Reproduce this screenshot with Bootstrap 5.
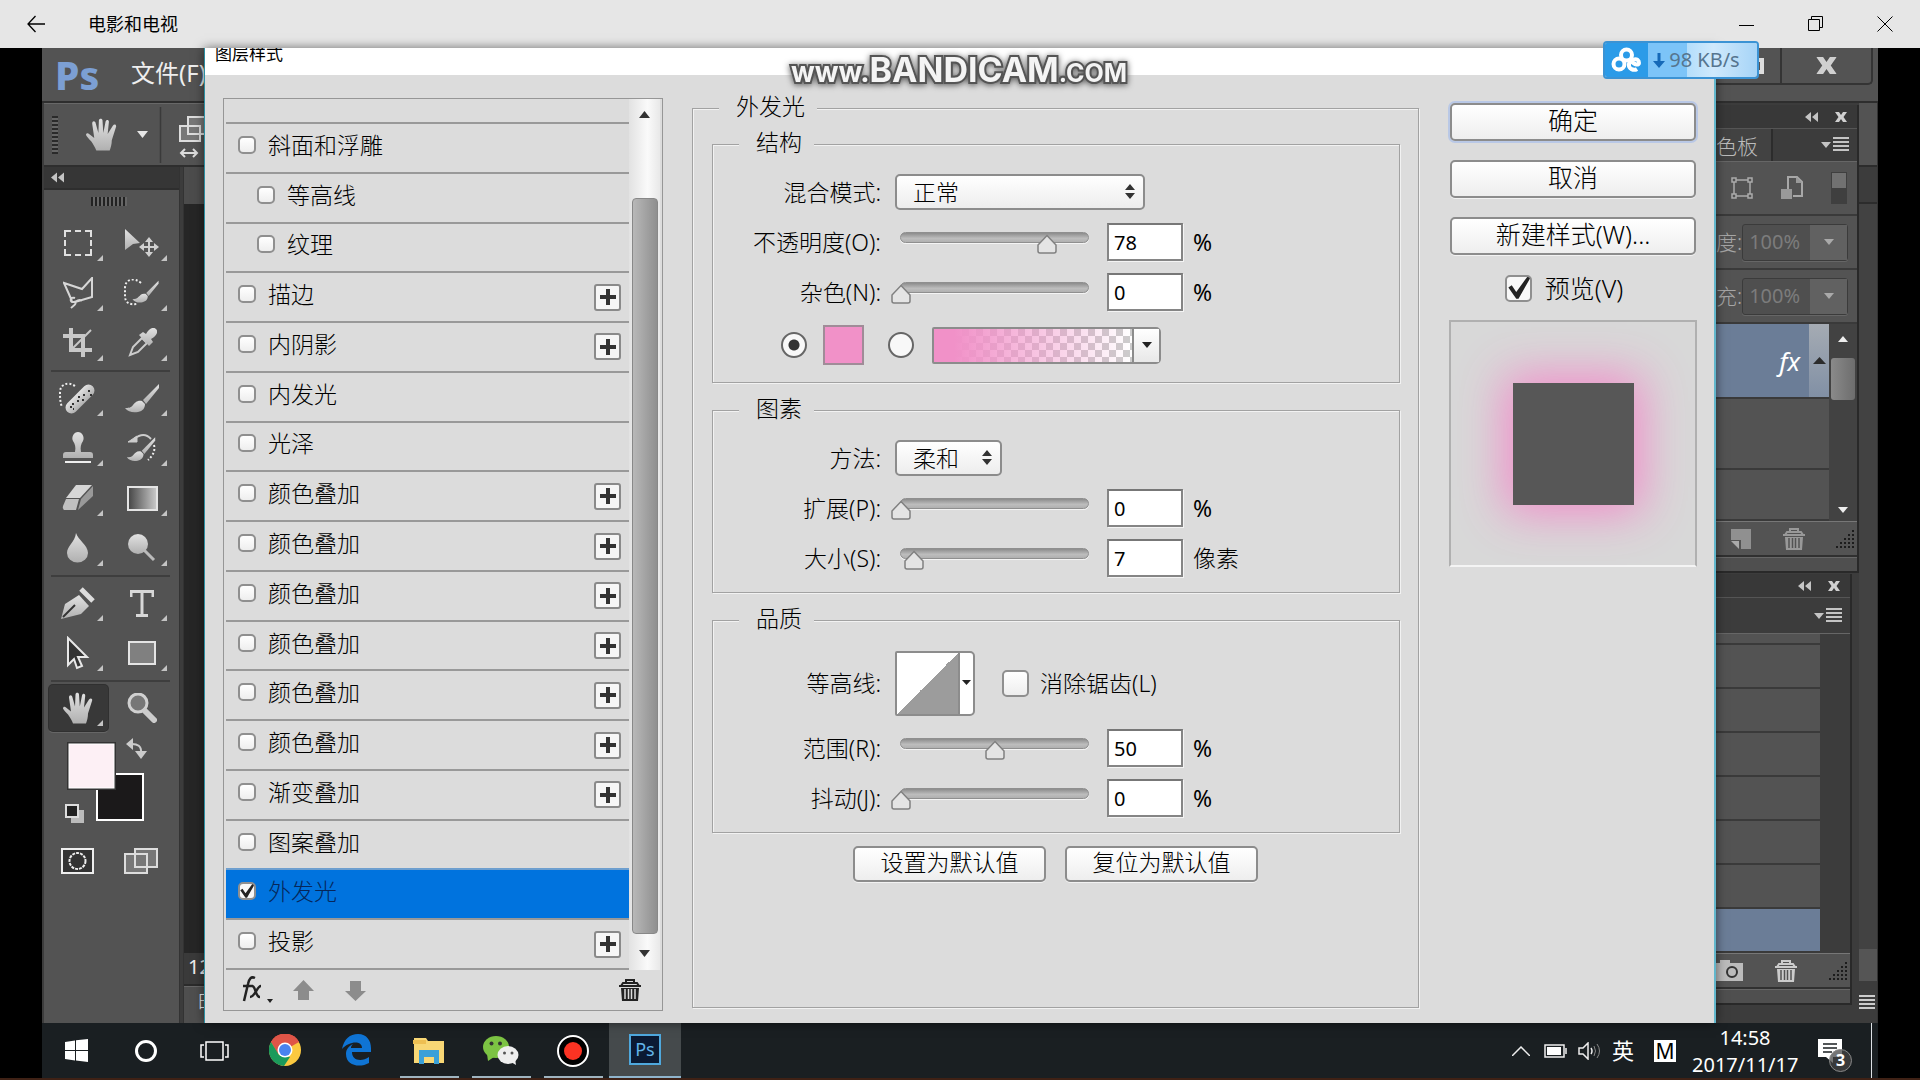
<!DOCTYPE html>
<html lang="zh-CN">
<head>
<meta charset="utf-8">
<meta name="viewport" content="width=device-width, initial-scale=1">
<title>电影和电视</title>
<link href="https://cdn.jsdelivr.net/npm/bootstrap@5.3.0/dist/css/bootstrap.min.css" rel="stylesheet">
<style>
:root{--ps:#535353;--ps-dark:#3c3c3c;--ps-line:#2e2e2e;--ps-hi:#686868;--dlg:#dcdcdc;--edge:#8c8c8c}
body{font-family:"Noto Sans","Noto Sans CJK SC",sans-serif;font-size:23px;line-height:28px;color:#000;background:#000;font-weight:300}
svg{display:block;flex:none}
button{font:inherit;color:inherit;padding:0;border:0;background:none}
.titlebar{height:48px;background:#e6e6e6;padding:0 1px 0 27px;font-size:18px;font-weight:400;color:#000}
.titlebar .caption{padding-left:43px}
.winbtn{width:69px;height:48px;display:grid;place-items:center}
.stage{padding:0 42px;min-height:0}
.side{width:162px;background:var(--ps-dark);overflow:hidden;color:#eee}
/* left side */
.menubar{height:55px;background:var(--ps);border-bottom:2px solid var(--ps-line);padding-left:13px;white-space:nowrap;font-size:24px;font-weight:400}
.ps-logo{font:800 39px/48px "Noto Sans",sans-serif;color:#7c9fd3;width:76px;flex:none}
.menubar span+span{line-height:46px;height:50px}
.optbar{height:64px;background:var(--ps);border-top:1px solid var(--ps-hi);border-bottom:2px solid var(--ps-line);margin-left:2px;padding-left:8px}
.grip{width:6px;height:38px;flex:none;margin-right:28px;background:repeating-linear-gradient(#2a2a2a 0 2px,#666 2px 4px)}
.toolcol{width:136px;flex:none;margin-left:2px;background:var(--ps);border-right:1px solid #333}
.toolhead{height:23px;background:#363636;border-bottom:2px solid var(--ps-line);padding:5px 0 0 7px}
.hgrip{width:36px;height:9px;margin:7px auto 12px 47px;background:repeating-linear-gradient(90deg,#222 0 2px,#666 2px 4px)}
.tools{display:grid;grid-template-columns:64px 64px;padding-left:2px}
.tool{width:64px;height:50px;display:grid;place-items:center;position:relative}
.tool::after{content:"";position:absolute;right:7px;bottom:7px;border-left:6px solid transparent;border-bottom:6px solid #c4c4c4}
.tool.plain::after{display:none}
.tool.active{background:#383838;border-radius:4px;width:59px;height:46px;margin:2px 0 2px 3px;box-shadow:0 0 0 1px #303030,0 2px 0 #666}
.tool.active::after{right:5px;bottom:5px}
.toolsep{grid-column:1/3;height:2px;background:#3e3e3e;margin:2px 4px 1px 5px}
.swatches{margin:5px 0 0 17px}
.doccol{margin-left:3px;min-width:0;background:#262626;border-left:1px solid #333}
.doctab{height:37px;background:#4c4c4c}
.zoomnum{height:33px;background:#3a3a3a;font-size:20px;font-weight:400;padding-left:4px;line-height:28px;border-bottom:2px solid #2b2b2b}
.timeline{height:37px;background:#4f4f4f;padding:2px 0 0 14px;font-size:20px;border-top:1px solid #666;white-space:nowrap}
/* dialog */
.dialogbox{background:var(--dlg);border-left:1px solid #2b8fa3;border-right:2px solid #62b7cc;box-shadow:0 0 10px #0008;z-index:1;min-width:0}
.dlg-title{height:27px;background:#fff;font-size:17px;font-weight:400;line-height:24px;padding-left:10px;overflow:hidden;color:#000}
.dlg-title span{display:block;margin-top:-6px}
.dlg-body{padding:0 17px 0 18px;min-height:0}
.stylelist{width:440px;margin:23px 0 12px;border:1px solid #969696;padding:0 2px;min-width:0}
.rowhead{height:23px}
.styles{--bs-list-group-bg:transparent;border-radius:0}
.styles li{border-top:2px solid #999;padding:0 8px 0 12px;min-height:0;flex:1 1 0}
.styles li:last-child{border-bottom:2px solid #999}
.styles li.sub{padding-left:31px}
.styles li label{padding-bottom:6px;gap:12px}
.styles li.on{background:#0073de;color:#06275a;border-color:#6e9fcf}
.tick{appearance:none;margin:0;flex:none;width:18px;height:18px;border:2px solid #8f8f8f;border-radius:5px;background:#f8f8f8 linear-gradient(#fff,#eee)}
.tick:checked{border-image:none;background:#f8f8f8 url("data:image/svg+xml,%3Csvg xmlns='http://www.w3.org/2000/svg' viewBox='0 0 24 24'%3E%3Cpath d='M3 11l3-2 4 6L21 0h3L12 21h-2z' fill='%23222'/%3E%3C/svg%3E") center/100% border-box}
.tick.big{width:27px;height:27px}
.plusbtn{width:27px;height:27px;border:2px solid #8a8a8a;border-radius:3px;background:#f6f6f6;display:grid;place-items:center}
.vscroll{width:31px;background:linear-gradient(90deg,#e2e2e2,#fafafa 60%,#e8e8e8);padding:12px 2px 13px}
.vthumb{width:26px;border:1px solid #888;border-radius:4px;background:linear-gradient(90deg,#b8b8b8,#8f8f8f)}
.listfoot{height:40px;padding:0 19px 0 14px}
.group{border:1px solid #a2a2a2;box-shadow:inset 1px 1px #f2f2f2,1px 1px #f2f2f2;margin:0;min-width:0}
.group>legend{float:none;width:auto;font-size:23px;line-height:25px;height:28px;margin:0 0 0 26px;padding:0 12px 0 17px;background:var(--dlg)}
.outer{margin:19px 30px 15px 29px;padding:8px 18px 0 19px}
.outer>legend{margin-left:7px}
.inner{padding:9px 0}
.inner+.inner{margin-top:13px}
.frow{height:50px}
.frow.tall{height:56px}
.frow.contour{height:80px}
.flabel{width:168px;text-align:right;margin-right:9px;white-space:nowrap}
.unit{font-weight:400}
.nudge{margin-left:5px}
.pick{appearance:none;height:36px;border:2px solid var(--edge);border-radius:5px;padding:0 16px;font-size:23px;font-weight:300;line-height:30px;color:#000;background:url("data:image/svg+xml,%3Csvg xmlns='http://www.w3.org/2000/svg' width='12' height='16'%3E%3Cpath d='M1 6L6 0l5 6zM1 9h10l-5 6z' fill='%23333'/%3E%3C/svg%3E") right 7px center no-repeat,linear-gradient(#fff,#ededed)}
.pick.wide{width:250px}.pick.short{width:107px}
.rail{width:209px;height:38px;position:relative;margin-right:8px}
.rail::before{content:"";position:absolute;left:10px;right:10px;top:9px;height:11px;border-radius:6px;background:linear-gradient(#8c8c8c,#bdbdbd 60%,#b0b0b0);border:1px solid #8f8f8f;box-shadow:0 1px #f4f4f4}
.rail input{appearance:none;position:relative;display:block;width:209px;height:38px;background:none;margin:0}
.rail input::-webkit-slider-thumb{appearance:none;width:22px;height:20px;margin-top:4px;background:url("data:image/svg+xml,%3Csvg xmlns='http://www.w3.org/2000/svg' width='22' height='20'%3E%3Cpath d='M11 1.500L20 11v6q0 2-2 2H4q-2 0-2-2v-6z' fill='%23e4e4e4' stroke='%23808080' stroke-width='1.500'/%3E%3C/svg%3E")}
.numbox{width:76px;height:38px;border:2px solid #858585;border-top-color:#777;background:#fff;padding:1px 5px 0;font-size:20px;font-weight:400;margin-right:10px;box-shadow:1px 1px #f4f4f4}
.dot{appearance:none;width:26px;height:26px;border:2px solid #666;border-radius:50%;margin:0;background:#f8f8f8}
.dot:checked{background:radial-gradient(circle,#333 0 5px,#f8f8f8 6px)}
.colorbox{width:41px;height:40px;border:2px solid #a08c98;background:#f191c8}
.gradpick{width:229px;height:37px;border:2px solid var(--edge);border-radius:2px 5px 5px 2px;display:flex;padding:0}
.gradpick i{flex:1;background:linear-gradient(90deg,#f191c8 10%,#f191c800),conic-gradient(#fff 25%,#ccc 0 50%,#fff 0 75%,#ccc 0) 0 0/14px 14px}
.gradpick b{width:27px;border-left:2px solid var(--edge);background:linear-gradient(#fff,#e8e8e8);display:grid;place-items:center}
.curve{width:80px;height:65px;border:2px solid var(--edge);border-radius:2px 5px 5px 2px;display:flex;padding:0;background:#fff}
.curve i{flex:1;background:linear-gradient(to bottom right,#fff 50%,#9c9c9c 50%)}
.curve b{width:15px;border-left:2px solid var(--edge);display:grid;place-items:center}
.pushbtn{border:2px solid var(--edge);border-radius:5px;background:linear-gradient(#fff,#eee);box-shadow:0 1px #f2f2f2;white-space:nowrap;padding-bottom:4px}
.defs{gap:19px;margin-top:13px;padding-right:1px}
.defs .pushbtn{width:193px;height:36px}
.actions{width:248px;padding-top:28px;font-size:25px}
.actions .pushbtn{height:38px;margin:0 1px 19px;line-height:30px}
.actions .pushbtn.primary{box-shadow:0 0 0 2px #b9c8e6}
.previewlbl{gap:13px;margin:0 0 18px;padding-right:18px;line-height:28px}
.preview{height:247px;border:2px solid #b0b0b0;border-bottom-color:#f4f4f4;background:#d8d8d8;display:grid;place-items:center}
.glow{width:121px;height:122px;background:#575757;box-shadow:0 0 44px 8px #f18cc9}
/* right side */
.sysbtns{height:55px;background:var(--ps);border-bottom:2px solid var(--ps-line)}
.sysbtns div{height:37px;width:157px;border:2px solid #343434;border-top:0;border-left:0;border-radius:0 0 5px 0}
.sysbtns button{height:35px;display:grid;place-items:center}
.dock{width:20px;flex:none;border-right:2px solid #333}
.pan{border-right:2px solid #292929}
.pan.first{margin-top:2px}
.pan.second{margin:1px 7px 0 0}
.panhead{height:24px;background:#383838;gap:17px;padding-right:10px;border-bottom:1px solid #555}
.pantabs{height:33px;background:var(--ps-dark);padding-right:8px;border-bottom:1px solid #666;font-size:21px;color:#bbb}
.second .pantabs{height:36px}
.pantabs .tabname{width:57px;height:32px;line-height:34px;border-right:2px solid #2c2c2c;background:#424242;white-space:nowrap}
.prow{height:54px;background:var(--ps);border-bottom:2px solid #3a3a3a;color:#a6a6a6;font-size:21px}
.pct{width:106px;height:37px;border:1px solid #3b3b3b;border-radius:3px;display:flex;background:#4f4f4f;margin-right:9px;box-shadow:0 1px #666}
.pct input{width:67px;border:0;background:none;color:#7c7c7c;font-size:20px;padding:0 0 0 6px}
.pct button{width:38px;background:#616161;display:grid;place-items:center}
.layers{height:197px;background:#3c3c3c}
.lay{background:var(--ps);border-bottom:2px solid #3a3a3a}
.lay.sel{background:#6b7d97;height:75px}
.lay.sel span{font:italic 26px/36px "Noto Sans",sans-serif;color:#fff;padding-right:9px}
.lay.sel button{width:20px;height:73px;background:linear-gradient(#a5abb3,#8190a5);display:grid;place-items:center}
.lscroll{width:28px;background:#424242}
.lscroll i{width:24px;height:42px;border-radius:3px;background:linear-gradient(90deg,#8a8a8a,#6d6d6d)}
.panfoot{height:36px;background:var(--ps);border-top:1px solid #777;border-bottom:2px solid #303030;padding-right:3px}
.panstrip{height:16px;background:#4f4f4f;border-top:1px solid #666;border-bottom:2px solid #292929}
.hist{width:104px}
.hist li{height:44px;background:var(--ps);border-bottom:2px solid #3a3a3a}
.hist li:first-child{height:11px}
.hist li:last-child{background:#6b7d97}
/* taskbar */
.taskbar{height:55px;margin:0 42px;background:#1a1f22;color:#fff;font-size:20px;line-height:27px;font-weight:400}
.tb{width:69px;display:grid;place-items:center}
.tb.app{width:72px;border-bottom:2px solid transparent}
.tb.run{background:linear-gradient(#9fb4c0,#9fb4c0) center bottom/59px 2px no-repeat;border:0}
.tb.cur{background:#454a4c;border-bottom-color:#8fb4cc}
.psicon{width:32px;height:31px;border:2px solid #4fa8dd;background:#0b1a33;color:#62b4e8;font-size:18px;line-height:26px;text-align:center}
.mbox{width:22px;height:22px;background:#fff;color:#000;line-height:22px;text-align:center;font-size:21px}
.badge3{position:absolute;left:11px;top:10px;width:23px;height:23px;border-radius:50%;background:#444b;border:1px solid #888;font-size:16px;line-height:21px;text-align:center;font-weight:700}
.edgeline{height:2px;background:#3f2115}
.speed{position:absolute;left:83.5%;top:41px;width:156px;height:38px;border:2px solid #3b93d4;border-radius:4px;color:#56758f;font-size:20px;font-weight:400;z-index:5;overflow:hidden;white-space:nowrap}
.speed .cloud{width:43px;height:34px;background:#2b9be8;display:grid;place-items:center}
.speed .rate{flex:1;padding-left:5px;height:34px;gap:4px;background:linear-gradient(90deg,#7cc4f8 39px,#b4defb 39px,#cfe9fc 60%,#a6d4f7)}
.wmark{position:absolute;left:0;right:0;top:52px;text-align:center;z-index:4;pointer-events:none;padding-right:2px;font:700 34px/36px "Inter",sans-serif;color:#f4f4f4;-webkit-text-stroke:4px #555;paint-order:stroke fill;filter:drop-shadow(0 1px 3px #555)}
.wmark span{font-size:28px}
.wmark span+span{font-size:25px}
</style>
</head>
<body class="min-vh-100 d-flex flex-column position-relative">
<svg width="0" height="0" class="position-absolute" aria-hidden="true">
<defs>
<linearGradient id="g" x2="0" y2="1"><stop stop-color="#e2e2e2"/><stop offset="1" stop-color="#b0b0b0"/></linearGradient>
<linearGradient id="h" x2="1" y2="0"><stop stop-color="#444"/><stop offset="1" stop-color="#ccc"/></linearGradient>
<symbol id="hand" viewBox="0 0 32 32"><path d="M10 31c-1-3-3-6-5-9-2-2-4-4-5-6 0-2 2-2 3-1l5 4L6 5c0-3 3-3 3.500 0l2.500 9L12.500 2c0-2.500 3.500-2.500 3.500 0l.8 12L19 3c.5-2.500 3.500-2 3.200.5L21 15l5-8c1.500-2 4-1 3 1.500L25 21c0 4-1 7-2 10z" fill="url(#g)"/></symbol>
<symbol id="dbl" viewBox="0 0 13 10"><path d="M6 0v10L0 5zM13 0v10L7 5z" fill="#c4c4c4"/></symbol>
<symbol id="cross" viewBox="0 0 12 10"><path d="M0 0h4l2 3 2-3h4L8.500 5 12 10H8L6 7l-2 3H0l3.500-5z" fill="#d0d0d0"/></symbol>
<symbol id="menu" viewBox="0 0 28 16"><path d="M0 5h10L5 11z M12 0h16v2H12zM12 4h16v2H12zM12 8h16v2H12zM12 12h16v2H12z" fill="#c4c4c4"/></symbol>
<symbol id="trash" viewBox="0 0 22 22"><path d="M7 4V1h8v3M2 7l2-3h14l2 3z" fill="none" stroke="currentColor" stroke-width="2"/><path d="M0 6h22v2H0zM2 9h18l-1 13H3z" fill="currentColor"/><path d="M6 10v10M9.500 10v10M12.500 10v10M16 10v10" stroke="var(--gap,#535353)" stroke-width="1.500"/></symbol>
<symbol id="size" viewBox="0 0 18 18"><path d="M17 0v18M13 4v14M9 8v10M5 12v6M1 16v2" stroke="#1c1c1c" stroke-width="2" stroke-dasharray="2 2"/></symbol>
<symbol id="brush" viewBox="0 0 36 30"><path d="M35 1L19 17l3 4L35 5z" fill="url(#g)"/><path d="M18 18c-5-1-7 2-9 4-2 3-5 3-8 3 3 4 8 5 13 4 5-1 7-4 7-8z" fill="url(#g)"/></symbol>
</defs></svg>

<header class="titlebar d-flex align-items-center">
<button aria-label="返回"><svg width="18" height="18" viewBox="0 0 18 18"><path d="M18 9H1M8.500 1L1 9l7.500 8" fill="none" stroke="#000" stroke-width="1.300"/></svg></button>
<span class="caption me-auto">电影和电视</span>
<button class="winbtn" aria-label="最小化"><svg width="15" height="15"><path d="M0 8.500h15" stroke="#000"/></svg></button>
<button class="winbtn" aria-label="还原"><svg width="16" height="16"><path d="M.5 3.500h11v11H.5zM3.500 3V.5h11v11H12" fill="none" stroke="#000"/></svg></button>
<button class="winbtn" aria-label="关闭"><svg width="16" height="16"><path d="M.5.5l15 15m0-15l-15 15" stroke="#000"/></svg></button>
</header>

<main class="stage flex-grow-1 d-flex">
<aside class="side d-flex flex-column">
<div class="menubar d-flex align-items-center"><span class="ps-logo">Ps</span><span>文件(F)</span></div>
<div class="optbar d-flex align-items-center flex-shrink-0">
<span class="grip"></span>
<svg width="33" height="34"><use href="#hand"/></svg>
<svg width="11" height="8" style="margin-left:18px"><path d="M0 0h11L5.500 7z" fill="#e6e6e6"/></svg>
<svg width="60" height="56" viewBox="0 0 60 56"><path d="M12.500 0v56" stroke="#3a3a3a" stroke-width="1.500"/><path d="M32 19h20v15H32zM40 10h22v17H40z" fill="#777" stroke="#ddd" stroke-width="2"/><path d="M33 46h16M37 42l-4 4 4 4M45 42l4 4-4 4" stroke="#ddd" stroke-width="2" fill="none"/></svg>
</div>
<div class="d-flex flex-grow-1">
<div class="toolcol">
<div class="toolhead"><svg width="13" height="11"><use href="#dbl"/></svg></div>
<div class="hgrip"></div>
<div class="tools">
<button class="tool" aria-label="选框"><svg width="28" height="26" viewBox="0 0 28 26"><path d="M1 7V1h6M11 1h6M21 1h6v6M27 10v6M27 19v6h-6M17 25h-6M7 25H1v-6M1 16v-6" fill="none" stroke="#e0e0e0" stroke-width="2"/></svg></button>
<button class="tool" aria-label="移动"><svg width="34" height="28" viewBox="0 0 34 28"><path d="M0 0l15 14-7 1-8 6z" fill="url(#g)"/><path d="M24 8l4 5h-3v4h4v-3l5 4-5 4v-3h-4v4h3l-4 5-4-5h3v-4h-4v3l-5-4 5-4v3h4v-4h-3z" fill="#d0d0d0"/></svg></button>
<button class="tool" aria-label="套索"><svg width="30" height="32" viewBox="0 0 30 32"><path d="M12 25l17-5V1L19 12 1 6l8 18M12 21c-5-2-6 5-1 4s5-4 8-1M12 25c2 2-2 4-4 6" fill="none" stroke="#d6d6d6" stroke-width="2"/></svg></button>
<button class="tool" aria-label="快速选择"><svg width="36" height="28" viewBox="0 0 36 28"><path d="M17 4C10-2 1 0 1 9v8c0 7 5 9 12 8" fill="none" stroke="#eee" stroke-width="2" stroke-dasharray="2 2"/><svg x="7" y="1" width="29" height="23" viewBox="0 0 36 30"><use href="#brush"/></svg></svg></button>
<button class="tool" aria-label="裁剪"><svg width="30" height="30" viewBox="0 0 30 30"><path d="M8 0v22h21M0 8h20v21" fill="none" stroke="#c8c8c8" stroke-width="4"/><path d="M9 21L28 2" stroke="#c8c8c8" stroke-width="2"/></svg></button>
<button class="tool" aria-label="吸管"><svg width="30" height="30" viewBox="0 0 30 30"><path d="M3 27l3-8 9-9 5 5-9 9z" fill="none" stroke="#ccc" stroke-width="2"/><path d="M12 7l4-3 3 2c3-5 7-8 10-5s0 7-5 10l2 3-4 4z" fill="url(#g)"/></svg></button>
<span class="toolsep"></span>
<button class="tool" aria-label="修复画笔"><svg width="38" height="32" viewBox="0 0 38 32"><path d="M16 4C8-1 1 3 1 10c0 5 0 10 2 15" fill="none" stroke="#eee" stroke-width="2" stroke-dasharray="2 2"/><rect x="3" y="11" width="36" height="12" rx="6" transform="rotate(-45 21 17)" fill="url(#g)"/><path d="M11 25h2m0-3h2m3-3h2m-1-4h2m2 3h2m-1-5h2m3-4h2m0 4h2M14 27h1" stroke="#333" stroke-width="2"/></svg></button>
<button class="tool" aria-label="画笔"><svg width="36" height="30"><use href="#brush"/></svg></button>
<button class="tool" aria-label="图章"><svg width="30" height="32" viewBox="0 0 30 32"><path d="M12 20c1-5 0-8-2-11-2-4 1-9 5-9s7 5 5 9c-2 3-3 6-2 11h9q3 0 3 3v3H0v-3q0-3 3-3z" fill="url(#g)"/><path d="M2 30h26" stroke="#eee" stroke-width="2"/></svg></button>
<button class="tool" aria-label="历史画笔"><svg width="32" height="30" viewBox="0 0 32 30"><path d="M8 6q10-8 17 0" fill="none" stroke="#ccc" stroke-width="2"/><path d="M11 3v6H2z" fill="#ccc" stroke="#ccc"/><svg y="3" width="30" height="26" viewBox="0 0 36 30"><use href="#brush"/></svg><path d="M28 12q2 8-6 15" fill="none" stroke="#eee" stroke-width="2" stroke-dasharray="2 2"/></svg></button>
<button class="tool" aria-label="橡皮擦"><svg width="32" height="28" viewBox="0 0 32 28"><path d="M14 1h16l-12 13H4z" fill="#d6d6d6"/><path d="M4 15h13l-3 11H2q-2-2-1-4z" fill="#c0c0c0"/><path d="M31 2v10L16 26l3-11z" fill="#999"/></svg></button>
<button class="tool" aria-label="渐变"><svg width="31" height="25"><rect x="1" y="1" width="29" height="23" fill="url(#h)" stroke="#e4e4e4" stroke-width="2"/></svg></button>
<button class="tool" aria-label="模糊"><svg width="22" height="30" viewBox="0 0 22 30"><path d="M9 0c2 7 12 12 12 20a10.500 9.500 0 0 1-21 0C0 13 8 9 9 0z" fill="url(#g)"/></svg></button>
<button class="tool" aria-label="减淡"><svg width="28" height="28" viewBox="0 0 28 28"><circle cx="10" cy="10" r="10" fill="url(#g)"/><path d="M16 16l10 10" stroke="#bbb" stroke-width="3"/></svg></button>
<span class="toolsep"></span>
<button class="tool" aria-label="钢笔"><svg width="34" height="34" viewBox="0 0 34 34"><path d="M0 33l4-15 14-9 10 11-8 8z" fill="url(#g)"/><path d="M2 31l12-12" stroke="#333" stroke-width="2"/><path d="M20 3l12 12" stroke="#ddd" stroke-width="5"/></svg></button>
<button class="tool" aria-label="文字"><svg width="24" height="27" viewBox="0 0 24 27"><path d="M1 7V1.500h22V7M12 1v24M6 25.500h12" fill="none" stroke="#d8d8d8" stroke-width="3"/></svg></button>
<button class="tool" aria-label="路径选择"><svg width="24" height="34" viewBox="0 0 24 34"><path d="M2 2l19 19h-9l4 9-5 2-3-9-6 6z" fill="#333" stroke="#e8e8e8" stroke-width="2"/></svg></button>
<button class="tool" aria-label="矩形"><svg width="28" height="25"><rect x="1" y="1" width="26" height="22" fill="#808080" stroke="#e4e4e4" stroke-width="2"/></svg></button>
<span class="toolsep"></span>
<button class="tool active" aria-label="抓手"><svg width="32" height="33"><use href="#hand"/></svg></button>
<button class="tool plain" aria-label="缩放"><svg width="30" height="30" viewBox="0 0 30 30"><circle cx="11" cy="10" r="9" fill="#777" stroke="#d0d0d0" stroke-width="3"/><path d="M18 18l9 9" stroke="#ccc" stroke-width="6" stroke-linecap="round"/></svg></button>
</div>
<div class="swatches"><svg width="100" height="138" viewBox="0 0 100 138">
<rect x="36" y="36" width="46" height="46" fill="#1b191a" stroke="#fff" stroke-width="2"/><rect x="6" y="4" width="49" height="48" fill="#333"/><rect x="8" y="6" width="45" height="44" fill="#fdf0f5" stroke="#fff"/>
<path d="M69 6q12-1 11 9" fill="none" stroke="#ccc" stroke-width="2"/><path d="M72 0v12l-7-6zM74 13h12l-6 8z" fill="#ccc"/>
<path d="M10 72h13v13H10z" fill="#bbb"/><path d="M5 67h12v12H5z" fill="#222" stroke="#ddd" stroke-width="2"/>
<rect x="1" y="111" width="31" height="24" fill="#333" stroke="#eee" stroke-width="2"/><circle cx="16.500" cy="123" r="8" fill="none" stroke="#eee" stroke-width="2" stroke-dasharray="3 1"/>
<path d="M64 116h22v19H64zM74 111h22v18H74z" fill="#777" stroke="#ddd" stroke-width="2"/></svg></div>
</div>
<div class="doccol flex-grow-1 d-flex flex-column"><div class="doctab"></div><div class="flex-grow-1"></div><div class="zoomnum">125</div><div class="timeline">时间轴</div></div>
</div>
</aside>

<section class="dialogbox flex-grow-1 d-flex flex-column" aria-label="图层样式">
<div class="dlg-title"><span>图层样式</span></div>
<div class="dlg-body flex-grow-1 d-flex">
<div class="stylelist d-flex flex-column flex-shrink-0">
<div class="d-flex flex-grow-1">
<div class="flex-grow-1 d-flex flex-column">
<div class="rowhead"></div>
<ul class="styles list-group list-unstyled flex-grow-1" id="styles"></ul>
</div>
<div class="vscroll d-flex flex-column align-items-center">
<svg width="11" height="7"><path d="M0 7h11L5.500 0z" fill="#333"/></svg>
<span class="flex-grow-1"></span>
<span class="vthumb" style="height:87%"></span>
<span class="pt-3"></span>
<svg width="11" height="7"><path d="M0 0h11L5.500 7z" fill="#333"/></svg>
</div>
</div>
<div class="listfoot d-flex align-items-center">
<svg width="36" height="28" viewBox="0 0 36 28"><path d="M15 2c-4-2-6 1-7 6L4 25M3 10h10M12 10c4 0 3 11 8 11M21 10c-4 0-6 11-11 11" fill="none" stroke="#222" stroke-width="2.500"/><path d="M27 23h6l-3 4z" fill="#222"/></svg>
<svg width="21" height="21" style="margin-left:17px"><path d="M10.500 0L21 11h-5v9H5v-9H0z" fill="#8c8c8c"/></svg>
<svg width="21" height="21" style="margin-left:31px"><path d="M10.500 21L21 11h-5V1H5v10H0z" fill="#8c8c8c"/></svg>
<svg width="22" height="22" class="ms-auto" style="color:#222;--gap:#dcdcdc"><use href="#trash"/></svg>
</div>
</div>

<fieldset class="group outer flex-grow-1"><legend>外发光</legend>
<fieldset class="group inner"><legend>结构</legend>
<div class="frow d-flex align-items-center"><label class="flabel" for="mode">混合模式:</label><select class="pick wide nudge" id="mode"><option>正常</option></select></div>
<div class="frow d-flex align-items-center"><label class="flabel" for="op">不透明度(O):</label><div class="rail"><input type="range" value="78" aria-label="不透明度"></div><input class="numbox" id="op" value="78"><span class="unit">%</span></div>
<div class="frow d-flex align-items-center"><label class="flabel" for="noise">杂色(N):</label><div class="rail"><input type="range" value="0" aria-label="杂色"></div><input class="numbox" id="noise" value="0"><span class="unit">%</span></div>
<div class="frow tall d-flex align-items-center" style="padding-left:68px"><input type="radio" class="dot" name="fill" checked aria-label="纯色"><button class="colorbox" style="margin:0 24px 0 16px" aria-label="颜色"></button><input type="radio" class="dot" name="fill" aria-label="渐变"><button class="gradpick" style="margin-left:18px" aria-label="渐变样式"><i></i><b><svg width="10" height="6"><path d="M0 0h10L5 6z" fill="#222"/></svg></b></button></div>
</fieldset>
<fieldset class="group inner"><legend>图素</legend>
<div class="frow d-flex align-items-center"><label class="flabel" for="meth">方法:</label><select class="pick short nudge" id="meth"><option>柔和</option></select></div>
<div class="frow d-flex align-items-center"><label class="flabel" for="spread">扩展(P):</label><div class="rail"><input type="range" value="0" aria-label="扩展"></div><input class="numbox" id="spread" value="0"><span class="unit">%</span></div>
<div class="frow d-flex align-items-center"><label class="flabel" for="sz">大小(S):</label><div class="rail"><input type="range" value="7" aria-label="大小"></div><input class="numbox" id="sz" value="7"><span>像素</span></div>
</fieldset>
<fieldset class="group inner"><legend>品质</legend>
<div class="frow contour d-flex align-items-center"><label class="flabel" for="curve">等高线:</label><button class="curve nudge" id="curve"><i></i><b><svg width="9" height="6"><path d="M0 0h9L4.500 5z" fill="#222"/></svg></b></button><label class="d-flex align-items-center" style="gap:11px;margin-left:27px"><input type="checkbox" class="tick big">消除锯齿(L)</label></div>
<div class="frow d-flex align-items-center"><label class="flabel" for="rng">范围(R):</label><div class="rail"><input type="range" value="50" aria-label="范围"></div><input class="numbox" id="rng" value="50"><span class="unit">%</span></div>
<div class="frow d-flex align-items-center"><label class="flabel" for="jit">抖动(J):</label><div class="rail"><input type="range" value="0" aria-label="抖动"></div><input class="numbox" id="jit" value="0"><span class="unit">%</span></div>
</fieldset>
<div class="defs d-flex justify-content-center"><button class="pushbtn">设置为默认值</button><button class="pushbtn">复位为默认值</button></div>
</fieldset>

<div class="actions d-flex flex-column flex-shrink-0">
<button class="pushbtn primary">确定</button><button class="pushbtn">取消</button><button class="pushbtn">新建样式(W)...</button>
<label class="previewlbl d-flex align-items-center justify-content-center"><input type="checkbox" class="tick big" checked>预览(V)</label>
<div class="preview"><div class="glow"></div></div>
</div>
</div>
</section>

<aside class="side d-flex flex-column">
<div class="sysbtns"><div class="d-flex"><button class="flex-grow-1 justify-content-end pe-3" aria-label="还原"><svg width="16" height="16"><path d="M2 2h12v12H2z" fill="none" stroke="#ddd" stroke-width="4"/></svg></button><button style="width:91px;border-left:2px solid #343434" aria-label="关闭"><svg width="21" height="17" viewBox="0 0 12 10"><use href="#cross"/></svg></button></div></div>
<div class="d-flex flex-grow-1">
<div class="flex-grow-1">
<div class="pan first">
<div class="panhead d-flex align-items-center justify-content-end"><svg width="13" height="10"><use href="#dbl"/></svg><svg width="12" height="10"><use href="#cross"/></svg></div>
<div class="pantabs d-flex align-items-center justify-content-between"><span class="tabname">色板</span><svg width="28" height="16"><use href="#menu"/></svg></div>
<div class="prow d-flex align-items-center justify-content-between" style="padding:0 10px 0 15px"><svg width="22" height="22"><path d="M3 3h16v16H3z" fill="none" stroke="#aaa" stroke-width="1.500"/><path d="M1 1h4v4H1zM17 1h4v4h-4zM1 17h4v4H1zM17 17h4v4h-4z" fill="#535353" stroke="#aaa" stroke-width="1.500"/></svg><svg width="22" height="24"><path d="M7 13V1h9l5 5v14H12" fill="none" stroke="#a8a8a8" stroke-width="2"/><path d="M15 1v6h6M0 13h11v10H0z" fill="#999"/></svg><svg width="16" height="32"><rect width="16" height="32" fill="#3f3f3f"/><rect x="1" y="1" width="14" height="15" fill="#717171"/></svg></div>
<div class="prow d-flex align-items-center justify-content-between"><label for="o1">度:</label><span class="pct"><input id="o1" value="100%"><button aria-label="选择"><svg width="10" height="6"><path d="M0 0h10L5 6z" fill="#aaa"/></svg></button></span></div>
<div class="prow d-flex align-items-center justify-content-between"><label for="o2">充:</label><span class="pct"><input id="o2" value="100%"><button aria-label="选择"><svg width="10" height="6"><path d="M0 0h10L5 6z" fill="#aaa"/></svg></button></span></div>
<div class="layers d-flex"><div class="flex-grow-1 d-flex flex-column"><div class="lay sel d-flex align-items-center justify-content-end"><span>fx</span><button aria-label="折叠"><svg width="13" height="7"><path d="M0 7h13L6.500 0z" fill="#2c2c2c"/></svg></button></div><div class="lay" style="height:71px"></div><div class="lay flex-grow-1"></div></div>
<div class="lscroll d-flex flex-column align-items-center"><svg width="10" height="18"><path d="M0 18h10l-5-6z" fill="#eee"/></svg><i class="mt-3"></i><svg width="10" height="6" class="mt-auto mb-2"><path d="M0 0h10L5 6z" fill="#eee"/></svg></div></div>
<div class="panfoot d-flex align-items-center justify-content-between" style="padding-left:15px"><svg width="20" height="20"><path d="M0 0h20v20H10v-9H0z" fill="#909090"/><path d="M0 12h8v8z" fill="#aaa"/></svg><svg width="22" height="22" style="color:#999"><use href="#trash"/></svg><svg width="18" height="18"><use href="#size"/></svg></div>
<div class="panstrip"></div>
</div>
<div class="pan second">
<div class="panhead d-flex align-items-center justify-content-end"><svg width="13" height="10"><use href="#dbl"/></svg><svg width="12" height="10"><use href="#cross"/></svg></div>
<div class="pantabs d-flex align-items-center justify-content-end"><svg width="28" height="16"><use href="#menu"/></svg></div>
<ul class="hist list-unstyled mb-0"><li></li><li></li><li></li><li></li><li></li><li></li><li></li><li></li></ul>
<div class="panfoot d-flex align-items-center justify-content-between"><svg width="27" height="22"><path d="M0 3h4V0h10v3h13v18H0z" fill="#bbb"/><circle cx="16" cy="12" r="5" fill="none" stroke="#333" stroke-width="2"/></svg><svg width="22" height="22" style="color:#ccc"><use href="#trash"/></svg><svg width="18" height="18"><use href="#size"/></svg></div>
<div class="panstrip"></div>
</div>
</div>
<div class="dock d-flex flex-column"><div style="height:62px;background:#535353"></div><div style="height:39px;border:2px solid #2c2c2c;border-width:2px 0"></div><div class="flex-grow-1" style="background:#424242"></div><div style="height:32px;background:#555"></div><div style="height:42px;padding-top:14px"><svg width="16" height="16"><path d="M0 1h16M0 5h16M0 9h16M0 13h16" stroke="#ccc" stroke-width="2"/></svg></div></div>
</div>
</aside>
</main>

<footer class="taskbar d-flex">
<button class="tb" aria-label="开始"><svg width="23" height="23" viewBox="0 0 23 23"><path d="M0 3l10-1.500V11H0zM11 1.300L23 0v11H11zM0 12h10v9.500L0 20zM11 12h12v11l-12-1.500z" fill="#fff"/></svg></button>
<button class="tb" aria-label="搜索"><svg width="24" height="24"><circle cx="12" cy="12" r="9.500" fill="none" stroke="#fff" stroke-width="3"/></svg></button>
<button class="tb" aria-label="任务视图"><svg width="30" height="20"><path d="M6 1h17v18H6zM4 4H1v12h3M25 4h3v12h-3" fill="none" stroke="#fff" stroke-width="1.500"/></svg></button>
<button class="tb app" aria-label="Chrome"><svg width="32" height="32" viewBox="0 0 32 32"><circle cx="16" cy="16" r="16" fill="#fbc940"/><path d="M16 16L2 8a16 16 0 0 1 28 0z" fill="#df5548"/><path d="M16 8h14A16 16 0 0 0 2 8l7 12z" fill="#df5548"/><path d="M2 8l8 13 11 2-6 9A16 16 0 0 1 2 8z" fill="#1b9a5b"/><circle cx="16" cy="16" r="7.500" fill="#fff"/><circle cx="16" cy="16" r="6" fill="#4a83ef"/></svg></button>
<button class="tb app" aria-label="Edge"><svg width="30" height="32" viewBox="0 0 30 32"><path d="M0 15C2 5 8 0 16 0c9 0 13 7 13 14v4H10c0 9 10 10 17 5v6c-9 5-23 3-23-9 0-5 3-8 7-10-2 2-2 3-2 4h11c0-8-13-7-20 1z" fill="#0f74d4"/></svg></button>
<button class="tb app run" aria-label="资源管理器"><svg width="32" height="26" viewBox="0 0 32 26"><path d="M1 0h12l2 3h16v22H1z" fill="#f8d775"/><path d="M0 2h13v4H0z" fill="#eebf52"/><path d="M6 12h20v14h-5v-7H11v7H6z" fill="#3aa0d8"/></svg></button>
<button class="tb app run" aria-label="微信"><svg width="36" height="30" viewBox="0 0 36 30"><ellipse cx="13" cy="11" rx="13" ry="11" fill="#7cc343"/><path d="M4 18l1 7 6-4z" fill="#7cc343"/><circle cx="8.500" cy="7.500" r="2" fill="#333"/><circle cx="17" cy="7.500" r="2" fill="#333"/><ellipse cx="25" cy="19" rx="10.500" ry="9" fill="#eee"/><path d="M28 26l5 3-1-6z" fill="#eee"/><circle cx="21.500" cy="17" r="1.500" fill="#555"/><circle cx="29" cy="17" r="1.500" fill="#555"/></svg></button>
<button class="tb app run" aria-label="录制"><svg width="32" height="32"><circle cx="16" cy="16" r="15" fill="#000" stroke="#fff" stroke-width="2"/><circle cx="16" cy="16" r="9" fill="#fb3323"/></svg></button>
<button class="tb app cur" aria-label="Photoshop"><span class="psicon">Ps</span></button>
<div class="ms-auto d-flex align-items-center">
<svg width="18" height="10"><path d="M0 10l9-9 9 9" fill="none" stroke="#eee" stroke-width="1.500"/></svg>
<svg width="23" height="14" style="margin-left:14px"><path d="M1 1h19v12H1zM22 4v6" fill="none" stroke="#eee" stroke-width="1.500"/><path d="M3 3h14v8H3z" fill="#fff"/></svg>
<svg width="23" height="18" style="margin-left:11px"><path d="M1 6h4l5-5v16l-5-5H1zM13 6q2 3 0 6" fill="none" stroke="#eee" stroke-width="1.500"/><path d="M16 4q3 5 0 10M19 2q5 7 0 14" fill="none" stroke="#888"/></svg>
<span style="margin-left:11px;font-size:22px">英</span>
<span class="mbox" style="margin-left:20px">M</span>
<div class="text-center" style="margin:0 20px 0 16px;width:106px">14:58<br>2017/11/17</div>
<div class="position-relative" style="margin-right:29px"><svg width="24" height="24"><path d="M0 0h24v18H15v6l-7-6H0z" fill="#fff"/><path d="M5 5h14M5 9h14M5 13h9" stroke="#1a1f22" stroke-width="1.500"/></svg><span class="badge3">3</span></div>
<span class="align-self-stretch border-start" style="width:7px"></span>
</div>
</footer>
<div class="edgeline"></div>

<div class="wmark"><span>www.</span>BANDICAM<span>.COM</span></div>
<div class="speed d-flex"><span class="cloud"><svg width="31" height="26" viewBox="0 0 31 26"><g fill="none" stroke="#fff" stroke-width="4"><circle cx="15.500" cy="8" r="5.500"/><circle cx="8" cy="17" r="5.500"/><path d="M19 13c5 6 9 5 9 3 0-6-9-4-10 1s5 7 8 5"/></g></svg></span><span class="rate d-flex align-items-center"><svg width="12" height="15"><path d="M4.500 0h3v8H12l-6 7-6-7h4.500z" fill="#1569b8"/></svg>98 KB/s</span></div>

<script src="https://cdn.jsdelivr.net/npm/bootstrap@5.3.0/dist/js/bootstrap.bundle.min.js"></script>
<script>
/* name, options: s = indented, p = has an add button, c = checked */
const rows=[['斜面和浮雕',''],['等高线','s'],['纹理','s'],['描边','p'],['内阴影','p'],['内发光',''],['光泽',''],
['颜色叠加','p'],['颜色叠加','p'],['颜色叠加','p'],['颜色叠加','p'],['颜色叠加','p'],['颜色叠加','p'],['渐变叠加','p'],['图案叠加',''],['外发光','c'],['投影','p']];
document.getElementById('styles').innerHTML=rows.map(([n,o])=>
`<li class="d-flex align-items-center justify-content-between ${o==='s'?'sub':''} ${o==='c'?'on':''}"><label class="d-flex align-items-center"><input type="checkbox" class="tick" ${o==='c'?'checked':''}>${n}</label>${o==='p'?'<button class="plusbtn" aria-label="添加"><svg width="16" height="16"><path d="M8 0v16M0 8h16" stroke="#333" stroke-width="4"/></svg></button>':''}</li>`).join('');
</script>
</body>
</html>
